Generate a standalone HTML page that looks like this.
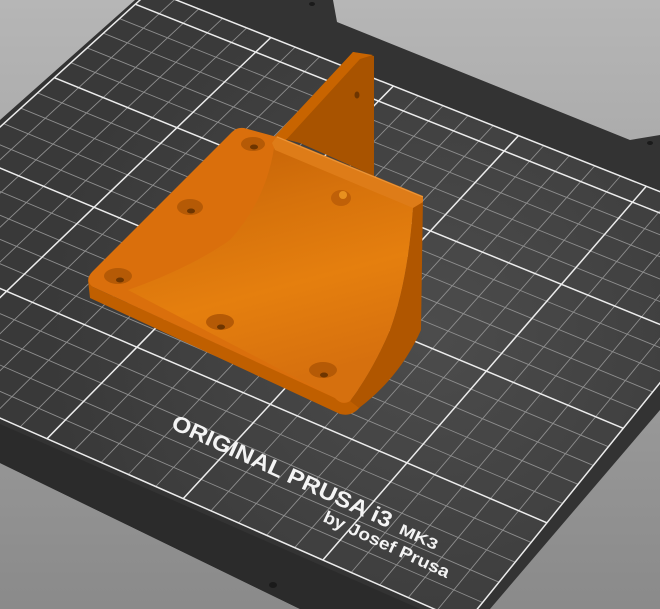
<!DOCTYPE html>
<html><head><meta charset="utf-8"><style>
html,body{margin:0;padding:0;width:660px;height:609px;overflow:hidden;background:#9a9a9a}
svg{display:block}
</style></head><body>
<svg id="s" width="660" height="609" viewBox="0 0 660 609" xmlns="http://www.w3.org/2000/svg">
<defs>
<linearGradient id="bg" x1="0" y1="0" x2="0" y2="1"><stop offset="0" stop-color="#b6b6b6"/><stop offset="1" stop-color="#8a8a8a"/></linearGradient>
<radialGradient id="bed" cx="430" cy="330" r="380" gradientUnits="userSpaceOnUse"><stop offset="0" stop-color="#4c4c4c"/><stop offset="1" stop-color="#393939"/></radialGradient>
<linearGradient id="conc" x1="0" y1="0" x2="0.3" y2="1"><stop offset="0" stop-color="#c26006"/><stop offset="0.35" stop-color="#d6720c"/><stop offset="0.65" stop-color="#e57f0e"/><stop offset="1" stop-color="#d6700e"/></linearGradient>
</defs>
<rect width="660" height="609" fill="url(#bg)"/>
<polygon points="0,120 135,0 333,0 337,22 630,140 660,135 660,410 490,609 300,609 0,463" fill="#333"/>
<polygon points="0,424 420,609 300,609 0,463" fill="#2b2b2b"/>
<polygon id="gq" points="-216,323 466,623 777,238 151,-10" fill="url(#bed)"/>
<g id="grid"></g>
<ellipse cx="273" cy="585" rx="4" ry="3" fill="#1a1a1a"/>
<ellipse cx="312" cy="4" rx="3" ry="2" fill="#1a1a1a"/>
<ellipse cx="650" cy="143" rx="3" ry="2" fill="#1a1a1a"/>
<g font-family="Liberation Sans, sans-serif" fill="#f4f4f4" font-weight="bold">
<text x="170" y="428" font-size="22" textLength="240" lengthAdjust="spacingAndGlyphs" transform="rotate(24.7 170 428)">ORIGINAL PRUSA i3</text>
<text x="398" y="533" font-size="15" textLength="41" lengthAdjust="spacingAndGlyphs" transform="rotate(24.7 398 533)">MK3</text>
<text x="322" y="521" font-size="17" textLength="137" lengthAdjust="spacingAndGlyphs" transform="rotate(24.7 322 521)">by Josef Prusa</text>
</g>
<!-- fin -->
<polygon points="277,137 353,52 374,56 374,176 300,143" fill="#a85300"/>
<polygon points="274,137 353,52 373,55 360,59 285,141" fill="#c86400"/>
<ellipse cx="357" cy="95" rx="2.5" ry="3.5" fill="#6e3500"/>
<!-- front face -->
<path d="M88,280 L90,298 L340,414 Q352,417 360,407 L352,399 Q346,404 338,399 L93,287 Z" fill="#c05f00"/>
<!-- right side -->
<path d="M413,207 L423,197 L421,330 Q400,377 359,408 L350,401 Q373,370 390,330 Q408,280 413,207 Z" fill="#b05600"/>
<!-- top/plate -->
<path d="M244,128 L277,137 L423,197 L413,207 Q408,280 390,330 Q373,370 350,401 Q342,406 335,398 L93,287 Q84,281 92,272 L232,132 Q237,127 244,128 Z" fill="#da6f0c"/>
<path d="M274,148 Q266,200 230,240 Q190,268 128,290 L335,398 Q342,405 350,401 Q373,370 390,330 Q408,280 413,207 Z" fill="url(#conc)"/>
<polygon points="277,136 423,196 423,202 413,208 275,150 272,143" fill="#de7c18"/>
<line x1="277" y1="137" x2="423" y2="197" stroke="#ec963a" stroke-width="1"/>
<g>
<ellipse cx="253" cy="144" rx="12" ry="7" fill="#b55a06"/><ellipse cx="254" cy="147" rx="4" ry="2.5" fill="#6e3500"/>
<ellipse cx="190" cy="207" rx="13" ry="8" fill="#b55a06"/><ellipse cx="191" cy="211" rx="4" ry="2.5" fill="#6e3500"/>
<ellipse cx="118" cy="276" rx="14" ry="8" fill="#b55a06"/><ellipse cx="120" cy="280" rx="4" ry="2.5" fill="#6e3500"/>
<ellipse cx="220" cy="322" rx="14" ry="8" fill="#b55a06"/><ellipse cx="221" cy="327" rx="4" ry="2.5" fill="#6e3500"/>
<ellipse cx="323" cy="370" rx="14" ry="8" fill="#b55a06"/><ellipse cx="324" cy="375" rx="4" ry="2.5" fill="#6e3500"/>
<ellipse cx="341" cy="198" rx="10" ry="8" fill="#bf6008"/><ellipse cx="343" cy="195" rx="4" ry="4" fill="#e8901f"/>
</g>
</svg>
<script>
(function(){
var p0=[-216,323],p1=[466,623],p2=[777,238],p3=[151,-10];
var dx1=p1[0]-p2[0],dx2=p3[0]-p2[0],dx3=p0[0]-p1[0]+p2[0]-p3[0];
var dy1=p1[1]-p2[1],dy2=p3[1]-p2[1],dy3=p0[1]-p1[1]+p2[1]-p3[1];
var den=dx1*dy2-dx2*dy1;
var g=(dx3*dy2-dx2*dy3)/den,h=(dx1*dy3-dx3*dy1)/den;
var a=p1[0]-p0[0]+g*p1[0],b=p3[0]-p0[0]+h*p3[0],c=p0[0];
var d=p1[1]-p0[1]+g*p1[1],e=p3[1]-p0[1]+h*p3[1],f=p0[1];
function P(u,v){var w=g*u+h*v+1;return [(a*u+b*v+c)/w,(d*u+e*v+f)/w];}
var G=document.getElementById('grid'),ns='http://www.w3.org/2000/svg',minor='',major='';
function L(q,r){return 'M'+q[0].toFixed(1)+','+q[1].toFixed(1)+'L'+r[0].toFixed(1)+','+r[1].toFixed(1);}
for(var i=0;i<=25;i++){var u=i/25,s=L(P(u,0),P(u,1));if(i%5==0)major+=s;else minor+=s;}
for(var j=0;j<=21;j++){var v=j/21,s=L(P(0,v),P(1,v));if(j%5==0||j==21)major+=s;else minor+=s;}
var m=document.createElementNS(ns,'path');m.setAttribute('d',minor);m.setAttribute('stroke','#8e8e8e');m.setAttribute('stroke-width','0.9');m.setAttribute('fill','none');G.appendChild(m);
var M=document.createElementNS(ns,'path');M.setAttribute('d',major);M.setAttribute('stroke','#ececec');M.setAttribute('stroke-width','1.5');M.setAttribute('fill','none');G.appendChild(M);
})();
</script>
</body></html>
